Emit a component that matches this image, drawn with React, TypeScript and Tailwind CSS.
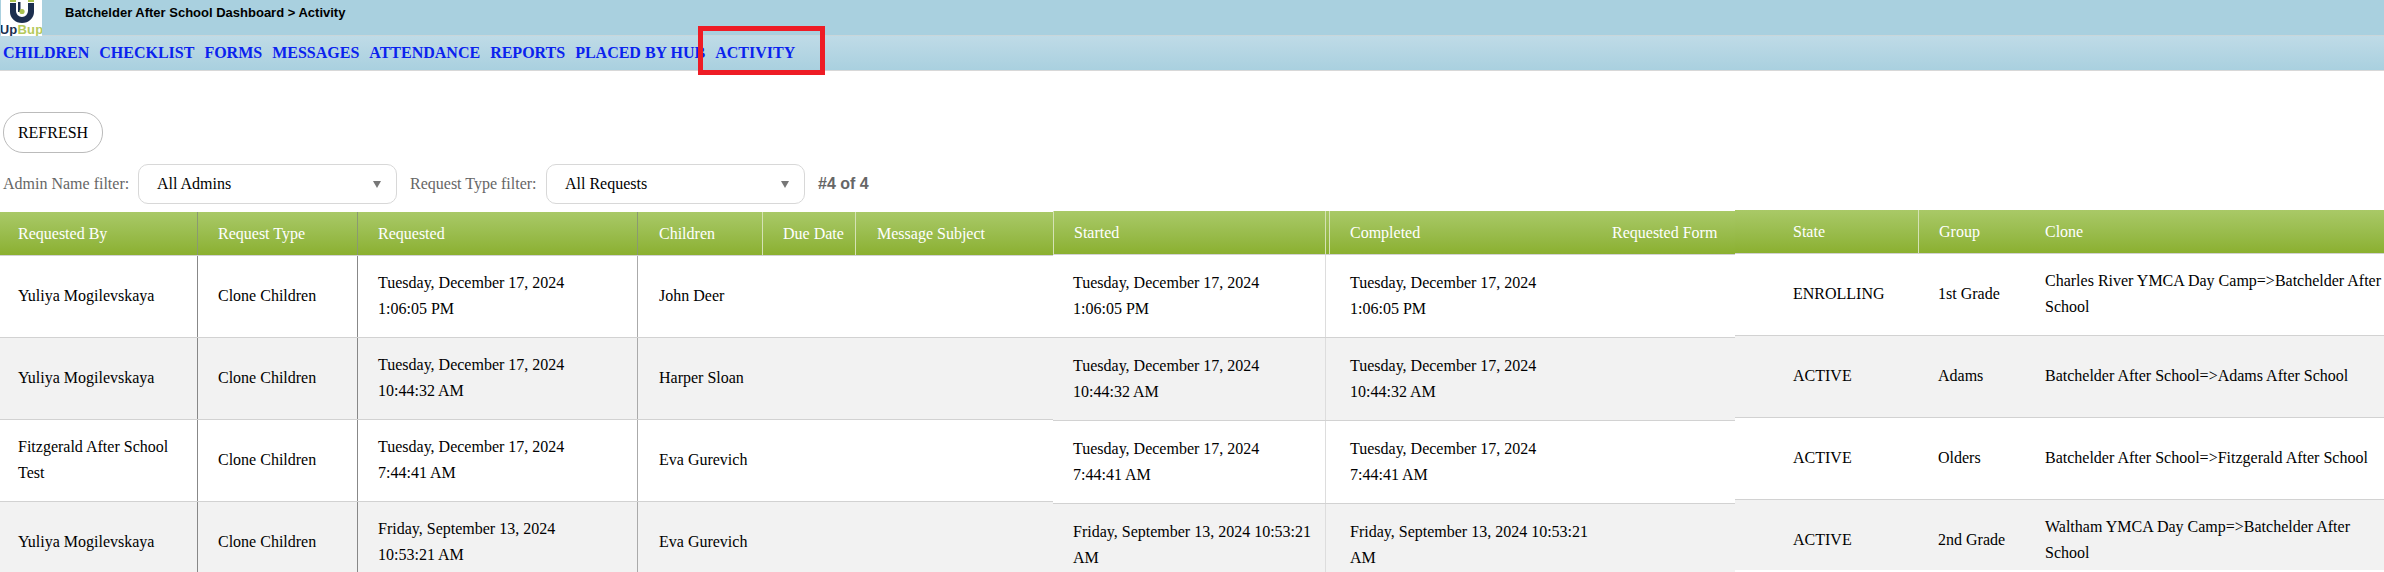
const NAV_LINKS = ['CHILDREN', 'CHECKLIST', 'FORMS', 'MESSAGES', 'ATTENDANCE', 'REPORTS', 'PLACED BY HUB', 'ACTIVITY'];

const ROWS = [
  { by: 'Yuliya Mogilevskaya', child: 'John Deer', date: 'Tuesday, December 17, 2024', time: '1:06:05 PM', state: 'ENROLLING', group: '1st Grade', clone: 'Charles River YMCA Day Camp=>Batchelder After School' },
  { by: 'Yuliya Mogilevskaya', child: 'Harper Sloan', date: 'Tuesday, December 17, 2024', time: '10:44:32 AM', state: 'ACTIVE', group: 'Adams', clone: 'Batchelder After School=>Adams After School' },
  { by: 'Fitzgerald After School Test', child: 'Eva Gurevich', date: 'Tuesday, December 17, 2024', time: '7:44:41 AM', state: 'ACTIVE', group: 'Olders', clone: 'Batchelder After School=>Fitzgerald After School' },
  { by: 'Yuliya Mogilevskaya', child: 'Eva Gurevich', date: 'Friday, September 13, 2024', time: '10:53:21 AM', state: 'ACTIVE', group: '2nd Grade', clone: 'Waltham YMCA Day Camp=>Batchelder After School' },
];

const headCell = 'flex h-full shrink-0 items-center text-[16px] text-white';
const bodyCell = 'flex h-full shrink-0 items-center pb-[1px] text-[16px] leading-[26px] text-black';

function rowBg(i: number) {
  return i % 2 === 1 ? 'bg-[#f2f2f2]' : 'bg-white';
}

function Logo() {
  return (
    <div className="ml-[1px] flex h-[36px] w-[41px] shrink-0 flex-col items-center overflow-hidden bg-white">
      <svg width="24" height="24" viewBox="0 0 24 24" className="shrink-0">
        <rect x="0" y="0" width="6" height="2" fill="#a9c24f" />
        <rect x="18" y="0" width="6" height="2" fill="#a9c24f" />
        <path d="M0 3h6v8a6 6 0 0 0 12 0V3h6v9a12 11 0 0 1-24 0z" fill="#1c2f4f" />
        <rect x="8" y="2" width="2.5" height="10" fill="#1c2f4f" />
        <circle cx="12" cy="11.5" r="2.6" fill="#a9c24f" />
      </svg>
      <div className="font-['Liberation_Sans',sans-serif] text-[13px] leading-[12px] font-bold tracking-[0.2px] whitespace-nowrap">
        <span className="text-[#1c2f4f]">Up</span>
        <span className="text-[#b4c95c]">Bup</span>
      </div>
    </div>
  );
}

function FilterSelect({ label, value, labelWidth }: { label: string; value: string; labelWidth: string }) {
  return (
    <>
      <span className={`${labelWidth} shrink-0 text-[16px] text-[#666]`}>{label}</span>
      <div className="flex h-[40px] w-[259px] shrink-0 items-center justify-between rounded-[10px] border border-[#d8d8d8] bg-white pl-[18px] pr-[15px] text-[16px] text-black">
        <span>{value}</span>
        <span className="h-0 w-0 border-x-[4px] border-t-[7px] border-x-transparent border-t-[#777]" />
      </div>
    </>
  );
}

// 左側: Requested By .. Message Subject
function SectionLeft() {
  return (
    <div className="w-[1053px] shrink-0">
      <div className="flex h-[43px] bg-gradient-to-b from-[#a9c967] to-[#8bb02f]">
        <div className={`${headCell} w-[197px] pl-[18px]`}>Requested By</div>
        <div className={`${headCell} w-[160px] border-l border-[#8a9a70] pl-[20px]`}>Request Type</div>
        <div className={`${headCell} w-[280px] border-l border-[#8a9a70] pl-[20px]`}>Requested</div>
        <div className={`${headCell} w-[125px] border-l border-[#8a9a70] pl-[21px]`}>Children</div>
        <div className={`${headCell} w-[93px] border-l border-[#d5e2b5] pl-[20px]`}>Due Date</div>
        <div className={`${headCell} w-[198px] border-l border-[#d5e2b5] pl-[21px]`}>Message Subject</div>
      </div>
      {ROWS.map((r, i) => (
        <div key={i} className={`flex h-[82px] border-t border-[#d2d2d2] ${rowBg(i)}`}>
          <div className={`${bodyCell} w-[197px] pl-[18px] pr-[10px]`}>{r.by}</div>
          <div className={`${bodyCell} w-[160px] border-l border-[#888] pl-[20px]`}>Clone Children</div>
          <div className={`${bodyCell} w-[280px] border-l border-[#888] pl-[20px]`}>
            <div>{r.date}<br />{r.time}</div>
          </div>
          <div className={`${bodyCell} w-[125px] border-l border-[#aaa] pl-[21px]`}>{r.child}</div>
        </div>
      ))}
    </div>
  );
}

// 中央: Started, Completed, Requested Form
function SectionMiddle() {
  return (
    <div className="-mt-[1px] w-[682px] shrink-0">
      <div className="flex h-[43px] bg-gradient-to-b from-[#a9c967] to-[#8bb02f]">
        <div className={`${headCell} w-[272px] border-l border-[#d5e2b5] pl-[20px]`}>Started</div>
        <div className="h-full w-[5px] shrink-0 border-x border-[#d5e2b5]" />
        <div className={`${headCell} w-[282px] pl-[20px]`}>Completed</div>
        <div className={headCell}>Requested Form</div>
      </div>
      {ROWS.map((r, i) => (
        <div key={i} className={`flex h-[83px] border-t border-[#d2d2d2] ${rowBg(i)}`}>
          {[0, 1].map((c) => (
            <div key={c} className={`${bodyCell} ${c === 0 ? 'w-[272px] pl-[20px] pr-[6px]' : 'w-[277px] border-l border-[#ddd] pl-[24px] pr-[8px]'}`}>
              {i === 3 ? (
                <div>{r.date} {r.time}</div>
              ) : (
                <div>{r.date}<br />{r.time}</div>
              )}
            </div>
          ))}
        </div>
      ))}
    </div>
  );
}

// 右側: State, Group, Clone
function SectionRight() {
  return (
    <div className="-mt-[2px] h-[360px] min-w-0 flex-1 overflow-hidden">
      <div className="flex h-[43px] bg-gradient-to-b from-[#a9c967] to-[#8bb02f]">
        <div className={`${headCell} w-[38px]`} />
        <div className={`${headCell} w-[145px] pl-[20px]`}>State</div>
        <div className={`${headCell} w-[107px] border-l border-[#d5e2b5] pl-[20px]`}>Group</div>
        <div className={`${headCell} pl-[20px]`}>Clone</div>
      </div>
      {ROWS.map((r, i) => (
        <div key={i} className={`flex h-[82px] border-t border-[#d2d2d2] ${rowBg(i)}`}>
          <div className="w-[38px] shrink-0" />
          <div className={`${bodyCell} w-[145px] pl-[20px]`}>{r.state}</div>
          <div className={`${bodyCell} w-[107px] pl-[20px]`}>{r.group}</div>
          <div className={`${bodyCell} w-[359px] pl-[20px]`}>{r.clone}</div>
        </div>
      ))}
    </div>
  );
}

export default function App() {
  return (
    <div className="relative h-[572px] w-[2384px] overflow-hidden bg-white font-['Liberation_Serif',serif]">
      <div className="flex h-[36px] items-start border-b border-[#c9d6da] bg-[#a9d0df]">
        <Logo />
        <div className="ml-[23px] mt-[5px] font-['Liberation_Sans',sans-serif] text-[13px] leading-[16px] font-bold text-black">
          Batchelder After School Dashboard &gt; Activity
        </div>
      </div>
      <nav className="flex h-[35px] items-center gap-[10px] border-b border-[#d8d8d8] bg-gradient-to-b from-[#bfdbe7] to-[#a9d0df] pl-[3px] pb-[1px]">
        {NAV_LINKS.map((link) => (
          <a key={link} className="text-[16px] font-bold whitespace-nowrap text-[#0a22ee]">{link}</a>
        ))}
      </nav>
      {/* annotation box */}
      <div className="absolute left-[698px] top-[26px] h-[49px] w-[127px] border-[5px] border-[#ee1c25]" />

      <div className="ml-[3px] mt-[41px] flex h-[41px] w-[100px] items-center justify-center rounded-[20px] border border-[#bbb] text-[16px] text-black">
        REFRESH
      </div>
      <div className="mt-[11px] flex h-[40px] items-center">
        <div className="flex items-center pl-[3px]">
          <FilterSelect label="Admin Name filter:" value="All Admins" labelWidth="w-[135px]" />
          <div className="w-[13px]" />
          <FilterSelect label="Request Type filter:" value="All Requests" labelWidth="w-[136px]" />
        </div>
        <span className="ml-[13px] font-['Liberation_Sans',sans-serif] text-[16px] font-bold text-[#666]">#4 of 4</span>
      </div>
      <div className="mt-[8px] flex">
        <SectionLeft />
        <SectionMiddle />
        <SectionRight />
      </div>
    </div>
  );
}
